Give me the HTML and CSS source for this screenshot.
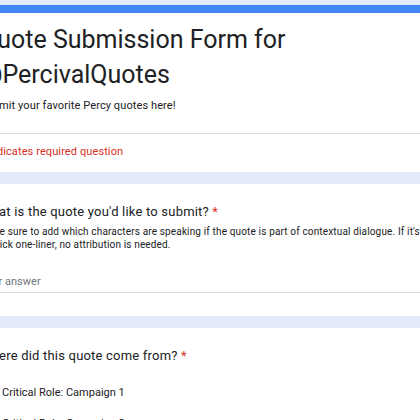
FILE: index.html
```html
<!DOCTYPE html>
<html>
<head>
<meta charset="utf-8">
<link rel="stylesheet" href="styles.css">
</head>
<body>
<main class="form">
  <section class="card header-card">
    <h1 class="title">Quote Submission Form for @PercivalQuotes</h1>
    <p class="form-desc">Submit your favorite Percy quotes here!</p>
    <div class="divider"></div>
    <p class="required-note">* Indicates required question</p>
  </section>
  <section class="card question">
    <h2 class="q-title">What is the quote you'd like to submit? <span class="star">*</span></h2>
    <p class="q-desc">Make sure to add which characters are speaking if the quote is part of contextual dialogue. If it's just a quick one-liner, no attribution is needed.</p>
    <div class="answer">Your answer</div>
  </section>
  <section class="card question">
    <h2 class="q-title">Where did this quote come from? <span class="star">*</span></h2>
    <label class="option"><span class="radio"></span><span class="opt-text">Critical Role: Campaign 1</span></label>
    <label class="option"><span class="radio"></span><span class="opt-text">Critical Role: Campaign 2</span></label>
  </section>
</main>
</body>
</html>
```

FILE: styles.css
```css
html, body {
  margin: 0;
  padding: 0;
}
body {
  background: #e4ecfc;
  font-family: Roboto, "Liberation Sans", sans-serif;
  color: #202124;
  overflow: hidden;
}
.form {
  margin: 5px 0 0 -42px;
  width: 540px;
  display: flex;
  flex-direction: column;
  gap: 12px;
}
.card {
  background: #fff;
  border-radius: 8px;
  padding: 0 24px 0 22px;
}
.header-card {
  border-top: 8px solid #4285f4;
  padding-top: 9px;
  padding-bottom: 12px;
}
.title {
  margin: 0;
  font-size: 25px;
  line-height: 35px;
  font-weight: 400;
  width: 320px;
}
.form-desc {
  margin: 6px 0 0;
  font-size: 11px;
  line-height: 16px;
  letter-spacing: 0.1px;
}
.divider {
  height: 1px;
  background: #dadce0;
  margin: 19px -24px 10px -22px;
}
.required-note {
  margin: 0;
  font-size: 11px;
  line-height: 16px;
  color: #d93025;
  letter-spacing: 0.1px;
}
.question {
  padding-top: 17px;
  padding-bottom: 23px;
}
.q-title {
  margin: 0;
  font-size: 13px;
  line-height: 22px;
  font-weight: 400;
  letter-spacing: 0.2px;
}
.star {
  color: #d93025;
}
.q-desc {
  margin: 2px 0 0;
  font-size: 10px;
  line-height: 13px;
  letter-spacing: 0.15px;
  width: 466px;
}
.answer {
  margin-top: 23px;
  font-size: 11px;
  line-height: 16px;
  color: #70757a;
  padding-bottom: 2px;
  border-bottom: 1px solid #dadce0;
}
.question:last-child {
  padding-top: 17px;
}
.option {
  display: flex;
  align-items: center;
  gap: 8px;
  margin-top: 17px;
  font-size: 11px;
  line-height: 18px;
}
.option + .option {
  margin-top: 13px;
}
.radio {
  width: 10px;
  height: 10px;
  border: 2px solid #5f6368;
  border-radius: 50%;
  flex: none;
}
```
